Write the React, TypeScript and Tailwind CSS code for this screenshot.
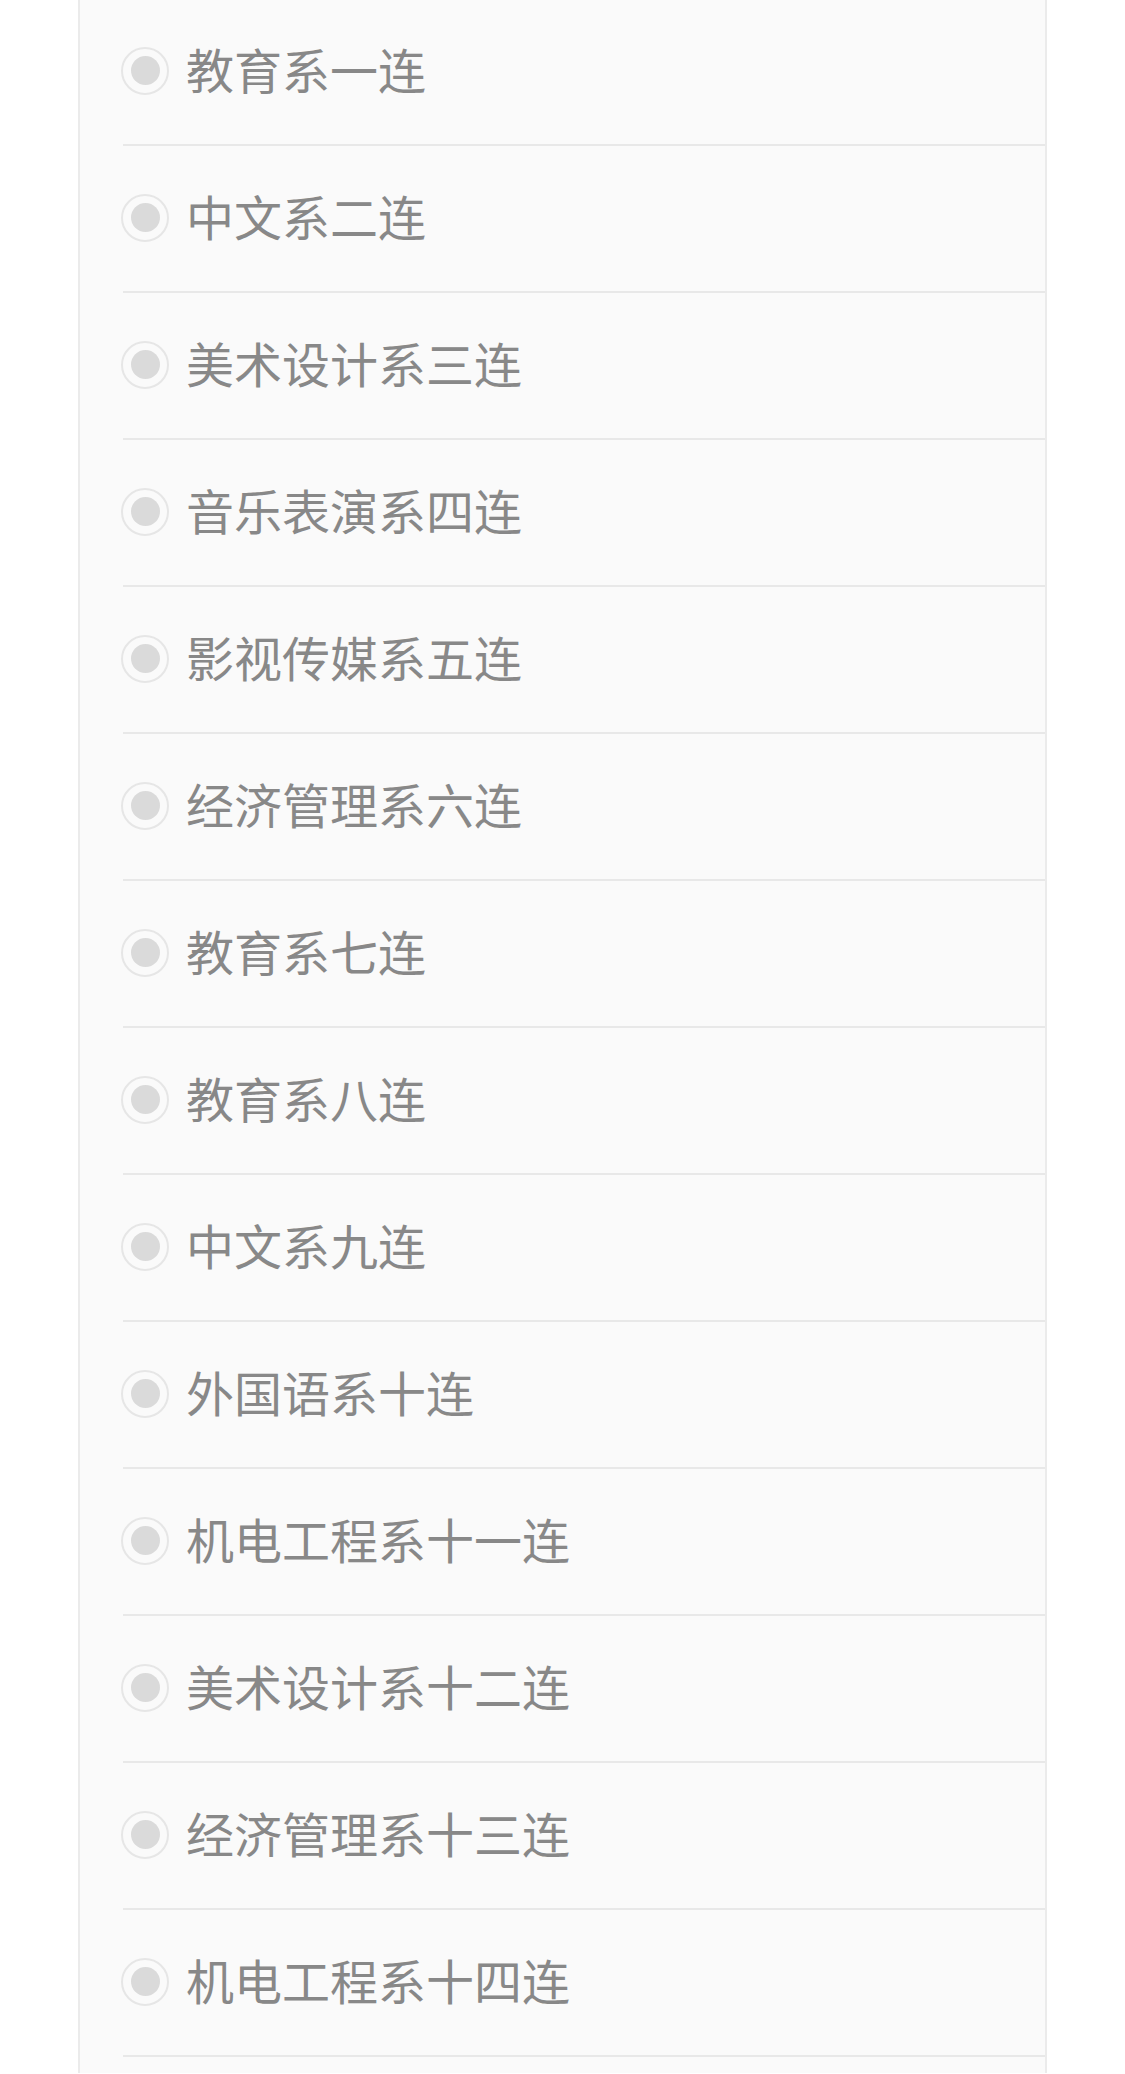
const UNITS = [
  "教育系一连",
  "中文系二连",
  "美术设计系三连",
  "音乐表演系四连",
  "影视传媒系五连",
  "经济管理系六连",
  "教育系七连",
  "教育系八连",
  "中文系九连",
  "外国语系十连",
  "机电工程系十一连",
  "美术设计系十二连",
  "经济管理系十三连",
  "机电工程系十四连",
];

function RadioRow({ label }: { label: string }) {
  return (
    <label className="flex flex-col cursor-pointer">
      <div className="h-[145px] flex items-center pl-[41px]">
        {/* disabled radio */}
        <span className="w-[48px] h-[48px] -mt-[2px] rounded-full border-2 border-[#e6e6e6] bg-[#fafafa] flex items-center justify-center shrink-0">
          <span className="w-[29px] h-[29px] rounded-full bg-[#dadada]" />
        </span>
        <span className="ml-[17px] pb-[7px] text-[48px] leading-none text-[#888888]">{label}</span>
      </div>
      <div className="ml-[43px] h-[2px] bg-[#e8e8e8]" />
    </label>
  );
}

export default function App() {
  return (
    <div
      className="min-h-[2074px] bg-white overflow-hidden"
      style={{ fontFamily: '"Noto Sans CJK SC", "Noto Sans", sans-serif' }}
    >
      <div className="mx-[78px] min-h-[2074px] bg-[#fafafa] border-l-2 border-r-2 border-[#ebebeb]">
        <div className="-mt-[1px] flex flex-col">
          {UNITS.map((u) => (
            <RadioRow key={u} label={u} />
          ))}
        </div>
      </div>
    </div>
  );
}
